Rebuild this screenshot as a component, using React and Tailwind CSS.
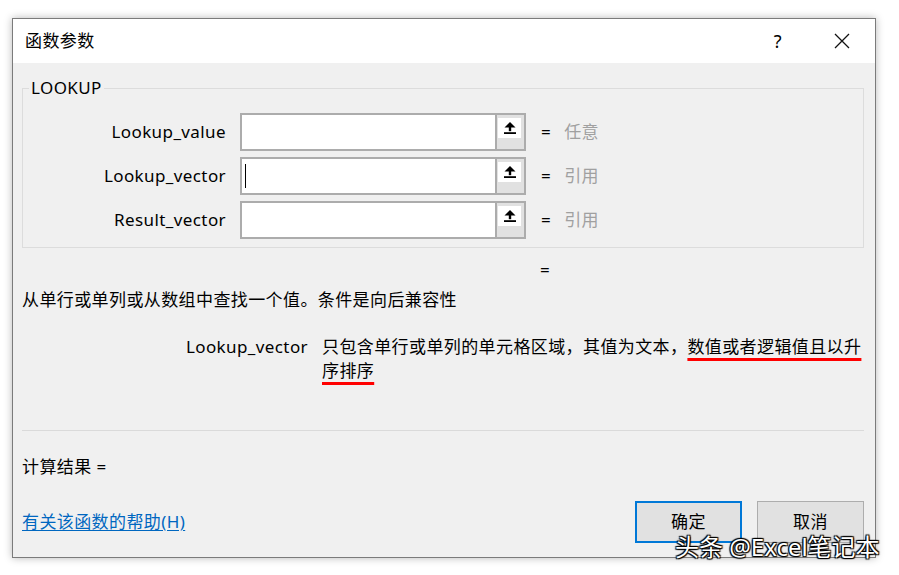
import React from 'react';

const font = { fontFamily: '"Noto Sans", "Noto Sans CJK SC", sans-serif' };

function PickButton() {
  return (
    <div className="w-[29px] shrink-0 border-l-2 border-[#acacac] bg-[#e1e1e1] pl-px pt-[3px]">
      <div className="flex h-[20px] w-[23px] items-center justify-center bg-white">
        <svg width="14" height="14" viewBox="0 0 14 14">
          <polygon points="7,1 12.5,6.5 1.5,6.5" fill="#000" />
          <rect x="5.8" y="6" width="2.4" height="4.2" fill="#000" />
          <rect x="1" y="11.2" width="12" height="1.8" fill="#000" />
        </svg>
      </div>
    </div>
  );
}

function ArgRow({ label, result, caret }) {
  return (
    <div className="flex h-[38px] items-center">
      <div className="w-[203px] shrink-0 text-right">{label}</div>
      <div className="ml-[14px] flex h-[38px] w-[286px] shrink-0 border-2 border-[#acacac] bg-white">
        <div className="flex flex-1 items-center">
          {caret && <span className="ml-[3px] h-[24px] w-px bg-black" />}
        </div>
        <PickButton />
      </div>
      <span className="ml-[15px]">=</span>
      <span className="ml-[13px] text-[#a0a0a0]">{result}</span>
    </div>
  );
}

export default function App() {
  return (
    <div className="relative h-[575px] w-[899px] overflow-hidden bg-white pl-[12px] pt-[18px] text-[17px] leading-[24px] tracking-[0.4px] text-black" style={font}>
      <div className="flex w-[864px] flex-col border border-[#7b7b7b] bg-[#f0f0f0] shadow-[0_0_8px_rgba(0,0,0,0.28)]">
        {/* title bar */}
        <div className="flex h-[44px] items-center bg-white pl-[12px] pr-[25px]">
          <span className="flex-1">函数参数</span>
          <span className="mr-[52px] text-[18px]">?</span>
          <svg width="16" height="16" viewBox="0 0 16 16">
            <path d="M1 1 L15 15 M15 1 L1 15" stroke="#111" strokeWidth="1.3" fill="none" />
          </svg>
        </div>

        <div className="flex flex-col pb-[14px] pl-[9px] pr-[11px] pt-[13px]">
          <fieldset className="border border-[#dcdcdc] px-0 pb-[8px] pt-[13px]">
            <legend className="ml-[6px] px-[2px] leading-[24px]">LOOKUP</legend>
            <div className="flex flex-col gap-[6px]">
              <ArgRow label="Lookup_value" result="任意" />
              <ArgRow label="Lookup_vector" result="引用" caret />
              <ArgRow label="Result_vector" result="引用" />
            </div>
          </fieldset>

          <div className="mt-[10px] pl-[518px]">=</div>

          <div className="mt-[6px]">从单行或单列或从数组中查找一个值。条件是向后兼容性</div>

          <div className="mt-[23px] flex">
            <div className="w-[286px] shrink-0 text-right">Lookup_vector</div>
            <div className="ml-[14px] [text-decoration-skip-ink:none]">
              只包含单行或单列的单元格区域，其值为文本，
              <span className="underline decoration-[#ff0000] decoration-3 underline-offset-[5px]">数值或者逻辑值且以升</span>
              <br />
              <span className="underline decoration-[#ff0000] decoration-3 underline-offset-[5px]">序排序</span>
            </div>
          </div>

          <div className="mt-[47px] h-px bg-[#dadada]" />

          <div className="mt-[24px]">计算结果 =</div>

          <div className="mt-[22px] flex items-center">
            <a href="#" className="flex-1 text-[#0067c0] underline underline-offset-2">有关该函数的帮助(H)</a>
            <button className="h-[42px] w-[107px] border-2 border-[#0078d7] bg-[#e1e1e1]">确定</button>
            <button className="ml-[15px] h-[42px] w-[107px] border border-[#adadad] bg-[#e1e1e1]">取消</button>
          </div>
        </div>
      </div>

      {/* watermark */}
      <div className="absolute left-[675px] top-[531px] text-[24px] leading-[32px] tracking-normal text-white [text-shadow:0_0_1px_#000,1px_1px_1px_#000,-1px_-1px_1px_#000,1px_-1px_1px_#000,-1px_1px_1px_#000]">
        头条 @Excel笔记本
      </div>
    </div>
  );
}
